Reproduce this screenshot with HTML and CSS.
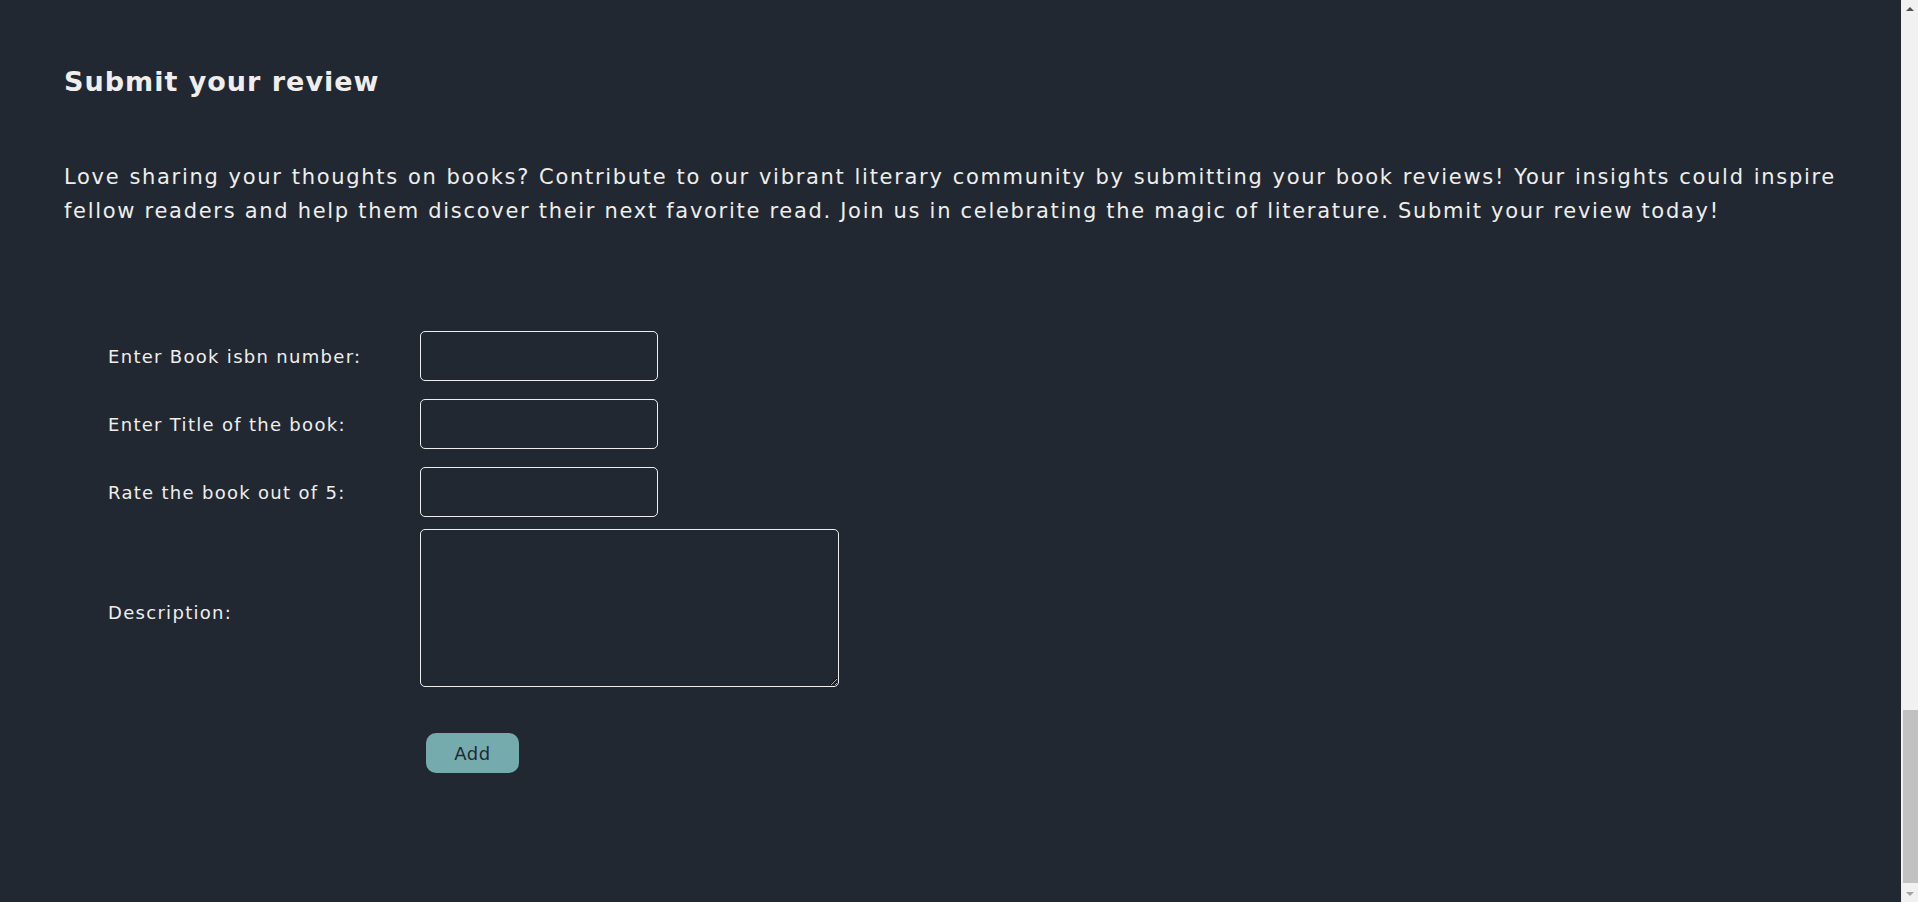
FILE: index.html
```html
<!DOCTYPE html>
<html lang="en">
<head>
<meta charset="utf-8">
<title>Submit your review</title>
<link rel="stylesheet" href="styles.css">
</head>
<body>
<section class="submit">
  <h2 class="submit-title">Submit your review</h2>
  <p class="submit-intro">Love sharing your thoughts on books? Contribute to our vibrant literary community by submitting your book reviews! Your insights could inspire fellow readers and help them discover their next favorite read. Join us in celebrating the magic of literature. Submit your review today!</p>
  <form class="review-form">
    <div class="row">
      <label class="label" for="isbn">Enter Book isbn number:</label>
      <input class="field" id="isbn" type="text">
    </div>
    <div class="row">
      <label class="label" for="title">Enter Title of the book:</label>
      <input class="field" id="title" type="text">
    </div>
    <div class="row">
      <label class="label" for="rate">Rate the book out of 5:</label>
      <input class="field" id="rate" type="text">
    </div>
    <div class="row row-desc">
      <label class="label" for="desc">Description:</label>
      <textarea class="area" id="desc"></textarea>
    </div>
    <div class="row row-btn">
      <span class="label"></span>
      <button class="add-btn" type="button">Add</button>
    </div>
  </form>
</section>
<div class="scrollbar" aria-hidden="true">
  <span class="sb-arrow sb-up"></span>
  <span class="sb-track"><span class="sb-thumb"></span></span>
  <span class="sb-arrow sb-down"></span>
</div>
</body>
</html>
```
FILE: styles.css
```css
html, body { margin: 0; padding: 0; }
body {
  background: #222831;
  color: #eeeeee;
  font-family: "DejaVu Sans", "Noto Sans", sans-serif;
  overflow: hidden;
}
.submit {
  height: 902px;
  box-sizing: border-box;
  padding: 63px 82px 0 64px;
}
.submit-title {
  margin: 0;
  font-size: 27px;
  line-height: 38px;
  font-weight: 700;
  letter-spacing: 1px;
}
.submit-intro {
  margin: 59px 0 0;
  font-size: 21px;
  line-height: 34px;
  letter-spacing: 1.7px;
  text-align: justify;
}
.review-form {
  margin-top: 103px;
  padding-left: 44px;
  display: flex;
  flex-direction: column;
  gap: 18px;
}
.row { display: flex; align-items: center; }
.row-desc { margin-top: -6px; }
.row-desc .label { margin-top: 8px; }
.row-btn { margin-top: 28px; }
.label {
  width: 312px;
  font-size: 18px;
  letter-spacing: 1.3px;
}
.field {
  width: 238px; height: 50px; box-sizing: border-box;
  background: transparent; border: 1px solid #eeeeee; border-radius: 5px;
  color: #eeeeee; margin: 0; padding: 0 8px;
}
.area {
  width: 419px; height: 158px; box-sizing: border-box;
  background: transparent; border: 1px solid #eeeeee; border-radius: 5px;
  color: #eeeeee; margin: 0;
}
.add-btn {
  margin-left: 6px;
  width: 93px; height: 40px;
  border: none; border-radius: 10px;
  background: #76abae; color: #222831;
  font-family: inherit; font-size: 18px;
  letter-spacing: 0.5px;
  padding: 0;
}
.scrollbar {
  position: fixed; top: 0; right: 0;
  width: 17px; height: 902px;
  background: #f1f1f1;
  display: flex; flex-direction: column;
}
.sb-arrow {
  height: 17px; display: flex; align-items: center; justify-content: center;
}
.sb-up::before {
  content: ""; border-left: 4px solid transparent; border-right: 4px solid transparent;
  border-bottom: 4px solid #505050;
}
.sb-down::before {
  content: ""; border-left: 4px solid transparent; border-right: 4px solid transparent;
  border-top: 4px solid #a3a3a3;
}
.sb-track { flex: 1; display: flex; flex-direction: column; justify-content: flex-end; padding: 0 0 2px 2px; }
.sb-thumb { height: 173px; background: #c1c1c1; }
```
